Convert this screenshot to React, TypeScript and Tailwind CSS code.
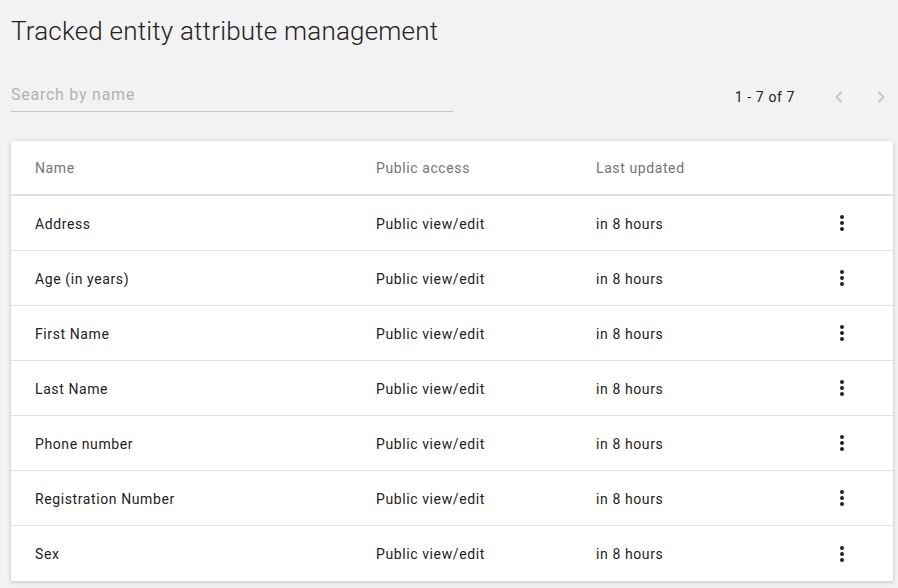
import React from "react";

const rows = [
  "Address",
  "Age (in years)",
  "First Name",
  "Last Name",
  "Phone number",
  "Registration Number",
  "Sex",
];

function Dots() {
  return (
    <svg width="6" height="18" viewBox="0 0 6 18" fill="#222">
      <circle cx="3" cy="3" r="2" />
      <circle cx="3" cy="9" r="2" />
      <circle cx="3" cy="15" r="2" />
    </svg>
  );
}

function Chevron({ dir }: { dir: "left" | "right" }) {
  return (
    <svg width="24" height="24" viewBox="0 0 24 24" fill="#c8c8c8">
      {dir === "left" ? (
        <path d="M15.41 7.41 14 6l-6 6 6 6 1.41-1.41L10.83 12z" />
      ) : (
        <path d="M10 6 8.59 7.41 13.17 12l-4.58 4.59L10 18l6-6z" />
      )}
    </svg>
  );
}

export default function App() {
  return (
    <div
      className="w-[898px] h-[588px] bg-[#f2f2f2] overflow-hidden"
      style={{ fontFamily: "Roboto, 'Liberation Sans', sans-serif" }}
    >
      <div className="pl-[11px] pr-[5px]">
        <h1 className="pt-[14px] text-[26px] leading-[34px] font-light text-[#222] tracking-[0.2px]">
          Tracked entity attribute management
        </h1>
        <div className="mt-[36px] flex items-start">
          <div className="w-[442px] h-[28px] border-b border-[#c4c4c4] text-[16px] leading-[22px] text-[#b3b3b3] tracking-[0.75px]">
            Search by name
          </div>
          <div className="flex-1 flex items-center justify-end mt-[1px]">
            <span className="text-[14px] text-[#222] mr-[32px] tracking-[0.6px]">1 - 7 of 7</span>
            <div className="w-[24px] mr-[18px] flex"><Chevron dir="left" /></div>
            <div className="w-[24px] flex"><Chevron dir="right" /></div>
          </div>
        </div>
        <div className="mt-[29px] w-[882px] bg-white shadow-[0_1px_4px_rgba(0,0,0,0.22)] tracking-[0.6px]">
          <div className="grid grid-cols-[341px_220px_1fr_102px] pl-[24px] pt-[2px] h-[55px] items-center border-b-2 border-[#e0e0e0] text-[14px] text-[#757575]">
            <div>Name</div>
            <div>Public access</div>
            <div>Last updated</div>
            <div />
          </div>
          {rows.map((r, i) => (
            <div
              key={r}
              className={`grid grid-cols-[341px_220px_1fr_102px] pl-[24px] pt-[2px] h-[55px] items-center text-[14px] text-[#222] ${
                i < rows.length - 1 ? "border-b border-[#e0e0e0]" : ""
              }`}
            >
              <div>{r}</div>
              <div>Public view/edit</div>
              <div>in 8 hours</div>
              <div className="flex justify-center -mt-[2px]"><Dots /></div>
            </div>
          ))}
        </div>
      </div>
    </div>
  );
}
